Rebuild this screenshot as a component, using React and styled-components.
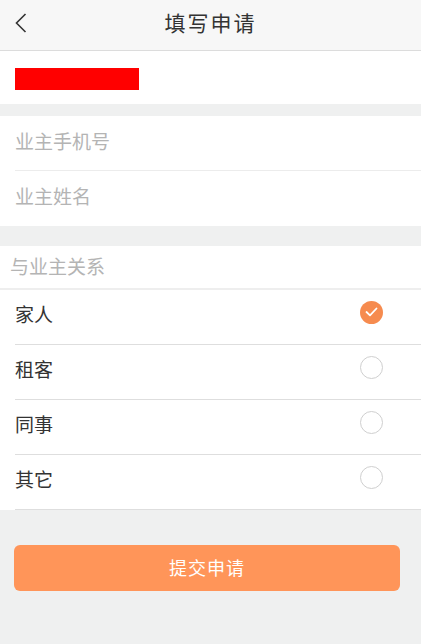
import React, { useState } from "react";
import styled, { createGlobalStyle } from "styled-components";

const GlobalStyle = createGlobalStyle`
  html, body {
    margin: 0;
    padding: 0;
    background: #eff0f0;
    font-family: "Noto Sans CJK SC", "Noto Sans", sans-serif;
  }
  * { box-sizing: border-box; }
`;

const Page = styled.div`
  width: 421px;
  min-height: 644px;
  background: #eff0f0;
  display: flex;
  flex-direction: column;
`;

const Header = styled.div`
  height: 51px;
  background: #f7f7f7;
  border-bottom: 1px solid #dcdcdc;
  display: flex;
  align-items: center;
  justify-content: center;
  position: relative;
`;

const Back = styled.button`
  position: absolute;
  left: 10px;
  top: 10px;
  width: 22px;
  height: 26px;
  padding: 0;
  border: 0;
  background: none;
  display: flex;
  align-items: center;
  justify-content: center;
`;

const Title = styled.h1`
  margin: 0 0 6px;
  font-size: 21px;
  font-weight: 400;
  color: #333;
  letter-spacing: 2px;
`;

const Section = styled.div`
  background: #fff;
  margin-top: ${(p) => p.$gap || 0}px;
`;

const NameRow = styled.div`
  height: 53px;
  display: flex;
  align-items: center;
  padding-left: 15px;
`;

const Redacted = styled.div`
  width: 124px;
  height: 22px;
  background: #ff0000;
  margin-top: 2px;
`;

const Field = styled.input`
  display: block;
  width: calc(100% - 15px);
  margin-left: 15px;
  height: 55px;
  border: 0;
  border-bottom: ${(p) => (p.$last ? "0" : "1px solid #ececec")};
  padding: 0 0 6px;
  font-family: inherit;
  font-size: 19px;
  color: #333;
  outline: none;
  background: transparent;
  &::placeholder {
    color: #b4b4b4;
  }
`;

const GroupLabel = styled.div`
  height: 44px;
  display: flex;
  align-items: center;
  padding: 0 0 4px 10px;
  font-size: 19px;
  color: #b4b4b4;
  border-bottom: 2px solid #eeeeee;
`;

const List = styled.div`
  background: #fff;
  width: 100%;
`;

const Option = styled.label`
  display: flex;
  align-items: center;
  justify-content: space-between;
  margin-left: 15px;
  height: 55px;
  border-bottom: 1px solid #dedede;
  padding: 0 38px 8px 0;
  cursor: pointer;
`;

const OptionText = styled.span`
  font-size: 19px;
  color: #333;
`;

const Radio = styled.span`
  width: 23px;
  height: 23px;
  border-radius: 50%;
  margin-top: -2px;
  display: flex;
  align-items: center;
  justify-content: center;
  background: ${(p) => (p.$on ? "#f68b4f" : "#fff")};
  border: ${(p) => (p.$on ? "0" : "1px solid #cfcfcf")};
`;

const Footer = styled.div`
  padding: 35px 21px 0 14px;
`;

const Submit = styled.button`
  width: 100%;
  height: 46px;
  border: 0;
  border-radius: 6px;
  background: #ff9559;
  color: #fff;
  font-family: inherit;
  font-size: 18px;
  letter-spacing: 1px;
  padding-bottom: 3px;
`;

const options = ["家人", "租客", "同事", "其它"];

export default function App() {
  const [picked, setPicked] = useState("家人");

  return (
    <Page>
      <GlobalStyle />
      <Header>
        <Back aria-label="返回">
          <svg width="12" height="20" viewBox="0 0 12 20">
            <path d="M10.5 1 L1.5 10 L10.5 19" fill="none" stroke="#333" strokeWidth="1.6" />
          </svg>
        </Back>
        <Title>填写申请</Title>
      </Header>

      <Section>
        <NameRow>
          <Redacted />
        </NameRow>
      </Section>

      <Section $gap={12}>
        <Field placeholder="业主手机号" />
        <Field placeholder="业主姓名" $last />
      </Section>

      <Section $gap={20}>
        <GroupLabel>与业主关系</GroupLabel>
        <List>
          {options.map((o) => (
            <Option key={o} onClick={() => setPicked(o)}>
              <OptionText>{o}</OptionText>
              <Radio $on={picked === o}>
                {picked === o && (
                  <svg width="13" height="10" viewBox="0 0 13 10">
                    <path d="M1.5 5 L5 8.3 L11.5 1.5" fill="none" stroke="#fff" strokeWidth="1.8" strokeLinecap="round" strokeLinejoin="round" />
                  </svg>
                )}
              </Radio>
            </Option>
          ))}
        </List>
      </Section>

      <Footer>
        <Submit>提交申请</Submit>
      </Footer>
    </Page>
  );
}
